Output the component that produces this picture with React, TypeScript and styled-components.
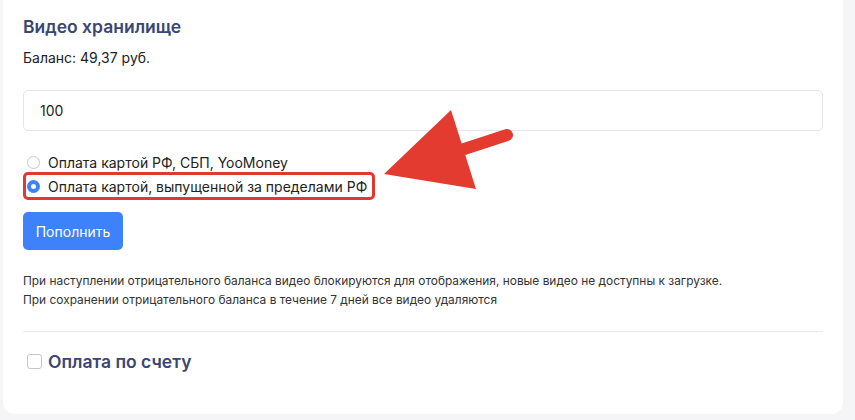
import { useState } from 'react';
import styled, { createGlobalStyle } from 'styled-components';

const GlobalStyle = createGlobalStyle`
  html, body {
    margin: 0;
    padding: 0;
    background: #f5f5f7;
    font-family: Inter, "Noto Sans", sans-serif;
  }
`;

const Page = styled.div`
  width: 855px;
  height: 420px;
  padding: 0 12px 0 3px;
  box-sizing: border-box;
  position: relative;
  overflow: hidden;
`;

const Card = styled.div`
  background: #fff;
  border-radius: 0 0 12px 12px;
  padding: 16px 20px 0;
  height: 414px;
  box-sizing: border-box;
`;

const Title = styled.h2`
  margin: 0;
  font-size: 17.5px;
  line-height: 22px;
  font-weight: 600;
  color: #3b4672;
`;

const Balance = styled.p`
  margin: 11px 0 0;
  font-size: 14px;
  line-height: 18px;
  color: #222;
`;

const AmountInput = styled.input`
  display: block;
  box-sizing: border-box;
  width: 100%;
  height: 41px;
  margin-top: 23px;
  padding: 0 16px;
  border: 1px solid #e6e6e8;
  border-radius: 5px;
  font-family: inherit;
  font-size: 14px;
  color: #222;
  outline: none;
`;

const Options = styled.div`
  margin-top: 21px;
  display: flex;
  flex-direction: column;
  align-items: flex-start;
`;

const Option = styled.label<{ $marked?: boolean }>`
  display: inline-flex;
  align-items: center;
  gap: 8px;
  height: ${(p) => (p.$marked ? '28px' : '20px')};
  box-sizing: border-box;
  padding: ${(p) => (p.$marked ? '0 5px 0 1px' : '0 0 0 4px')};
  border: ${(p) => (p.$marked ? '3px solid #e0392f' : 'none')};
  border-radius: 5px;
  font-size: 14px;
  color: #222;
  cursor: pointer;
`;

const Radio = styled.span<{ $checked?: boolean }>`
  width: 13px;
  height: 13px;
  box-sizing: border-box;
  border-radius: 50%;
  border: ${(p) => (p.$checked ? '4px solid #3d82fb' : '1px solid #c9c9cc')};
  background: #fff;
  flex-shrink: 0;
`;

const Button = styled.button`
  margin-top: 12px;
  width: 100px;
  height: 38px;
  border: none;
  border-radius: 5px;
  background: #3d82fb;
  color: #fff;
  font-family: inherit;
  font-size: 14px;
  cursor: pointer;
`;

const Notes = styled.div`
  margin-top: 21px;
  font-size: 11.9px;
  line-height: 19px;
  color: #333;
`;

const Divider = styled.hr`
  margin: 22px 0 0;
  border: none;
  border-top: 1px solid #e8e8ea;
`;

const InvoiceRow = styled.label`
  margin-top: 19px;
  padding-left: 4px;
  display: flex;
  align-items: center;
  gap: 6px;
  font-size: 17.5px;
  font-weight: 600;
  color: #3b4672;
  cursor: pointer;
`;

const Checkbox = styled.span`
  width: 15px;
  height: 15px;
  box-sizing: border-box;
  border: 1px solid #c8c8cc;
  border-radius: 3px;
  background: #fff;
`;

const Arrow = styled.svg`
  position: absolute;
  left: 0;
  top: 0;
  pointer-events: none;
`;

export default function App() {
  const [method, setMethod] = useState(1);
  return (
    <Page>
      <GlobalStyle />
      <Card>
        <Title>Видео хранилище</Title>
        <Balance>Баланс: 49,37 руб.</Balance>
        <AmountInput defaultValue="100" />
        <Options>
          <Option onClick={() => setMethod(0)}>
            <Radio $checked={method === 0} />
            Оплата картой РФ, СБП, YooMoney
          </Option>
          <Option $marked onClick={() => setMethod(1)}>
            <Radio $checked={method === 1} />
            Оплата картой, выпущенной за пределами РФ
          </Option>
        </Options>
        <Button>Пополнить</Button>
        <Notes>
          При наступлении отрицательного баланса видео блокируются для отображения, новые видео не доступны к загрузке.
          <br />
          При сохранении отрицательного баланса в течение 7 дней все видео удаляются
        </Notes>
        <Divider />
        <InvoiceRow>
          <Checkbox />
          Оплата по счету
        </InvoiceRow>
      </Card>
      <Arrow width="855" height="420" viewBox="0 0 855 420">
        <line x1="449" y1="154" x2="507" y2="135" stroke="#e33b30" strokeWidth="12" strokeLinecap="round" />
        <polygon points="451,110 384,174 476,189" fill="#e33b30" />
      </Arrow>
    </Page>
  );
}
